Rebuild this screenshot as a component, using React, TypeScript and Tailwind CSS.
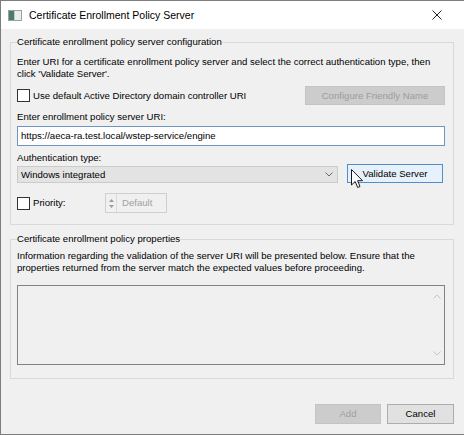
import React from "react";

const font = { fontFamily: '"Liberation Sans", Arial, sans-serif' };

function CheckBox() {
  return <div className="w-[13px] h-[13px] border border-[#333333] bg-white shrink-0" />;
}

function Chevron({ up = false, color = "#707070" }: { up?: boolean; color?: string }) {
  return (
    <svg width="8" height="5" viewBox="0 0 8 5" className="block">
      <path
        d={up ? "M0.5 4.5 L4 1 L7.5 4.5" : "M0.5 0.5 L4 4 L7.5 0.5"}
        fill="none"
        stroke={color}
        strokeWidth="1"
      />
    </svg>
  );
}

function Cursor() {
  return (
    <svg width="13" height="20" viewBox="0 0 13 20" className="block">
      <path
        d="M0.5 0.5 L0.5 16 L4.2 12.5 L6.7 18.5 L9 17.5 L6.6 11.7 L11.5 11.7 Z"
        fill="white"
        stroke="#1a1a1a"
        strokeWidth="1"
        strokeLinejoin="round"
      />
    </svg>
  );
}

function AppIcon() {
  return (
    <svg width="14" height="11" viewBox="0 0 14 11" className="block">
      <rect x="0.5" y="0.5" width="13" height="10" fill="#e9ecec" stroke="#9aa2a2" />
      <rect x="1" y="1" width="5" height="9" fill="#4c7d62" />
      <rect x="6" y="1" width="1" height="9" fill="#c2c9c9" />
    </svg>
  );
}

export default function App() {
  return (
    <div
      className="w-[464px] h-[435px] flex flex-col bg-[#f0f0f0] border-l border-t border-b border-[#7d7d7d] text-black overflow-hidden"
      style={font}
    >
      {/* title bar */}
      <div className="h-[28px] bg-white flex items-center pl-[7px] shrink-0">
        <AppIcon />
        <span className="ml-[7px] text-[10.5px] text-black leading-none">
          Certificate Enrollment Policy Server
        </span>
        <div className="ml-auto mr-[22px]">
          <svg width="10" height="10" viewBox="0 0 10 10" className="block">
            <path d="M0.5 0.5 L9.5 9.5 M9.5 0.5 L0.5 9.5" stroke="#222" strokeWidth="1" />
          </svg>
        </div>
      </div>

      <div className="flex flex-col pl-[9px] text-[9.6px] leading-[12px]">
        {/* server configuration group */}
        <fieldset className="mt-[7px] w-[444px] h-[189px] border border-[#d9d9d9] px-[6px] pt-[8px] relative">
          <legend className="px-0">Certificate enrollment policy server configuration</legend>
          <p>
            Enter URI for a certificate enrollment policy server and select the correct authentication type, then
          </p>
          <p>click 'Validate Server'.</p>

          <div className="mt-[6px] h-[19px] flex items-center">
            <CheckBox />
            <span className="ml-[3px]">Use default Active Directory domain controller URI</span>
            <div className="ml-auto mr-[2px] w-[140px] h-[19px] flex items-center justify-center bg-[#cccccc] border border-[#c4c4c4] text-[#9c9c9c]">
              Configure Friendly Name
            </div>
          </div>

          <p className="mt-[6px]">Enter enrollment policy server URI:</p>
          <div className="mt-[3px] h-[20px] w-[428px] bg-white border border-[#6f95bf] flex items-center pl-[3px]">
            https://aeca-ra.test.local/wstep-service/engine
          </div>

          <p className="mt-[6px]">Authentication type:</p>
          <div className="h-[19px] flex items-end">
            <div className="w-[321px] h-[17px] bg-[#e3e3e3] border border-[#cbcbcb] flex items-center pl-[3px]">
              <span>Windows integrated</span>
              <div className="ml-auto mr-[4px]">
                <Chevron color="#6a6a6a" />
              </div>
            </div>
            <div className="relative ml-[9px] w-[96px] h-[19px] bg-[#e6f1fb] border border-[#4f8fcc] flex items-center justify-center">
              Validate Server
              <div className="absolute left-[3px] top-[4px]">
                <Cursor />
              </div>
            </div>
          </div>

          <div className="mt-[10px] h-[20px] flex items-center">
            <div className="w-[88px] flex items-center">
              <CheckBox />
              <span className="ml-[3px]">Priority:</span>
            </div>
            <div className="w-[62px] h-[20px] border border-[#cfcfcf] flex items-stretch text-[#a0a0a0]">
              <div className="w-[11px] border-r border-[#dadada] flex flex-col items-center justify-center gap-[3px]">
                <svg width="5" height="3" viewBox="0 0 5 3" className="block">
                  <path d="M0 3 L2.5 0 L5 3 Z" fill="#9a9a9a" />
                </svg>
                <svg width="5" height="3" viewBox="0 0 5 3" className="block">
                  <path d="M0 0 L2.5 3 L5 0 Z" fill="#9a9a9a" />
                </svg>
              </div>
              <span className="ml-[5px] self-center">Default</span>
            </div>
          </div>
        </fieldset>

        {/* policy properties group */}
        <fieldset className="mt-[8px] w-[444px] h-[146px] border border-[#d9d9d9] px-[6px] pt-[5px]">
          <legend className="px-0">Certificate enrollment policy properties</legend>
          <p>
            Information regarding the validation of the server URI will be presented below. Ensure that the
          </p>
          <p>properties returned from the server match the expected values before proceeding.</p>
          <div className="mt-[11px] w-[428px] h-[80px] border border-[#828282] flex justify-end">
            <div className="w-[14px] flex flex-col items-center justify-between pt-[8px] pb-[8px]">
              <Chevron up color="#c4c4c4" />
              <Chevron color="#c4c4c4" />
            </div>
          </div>
        </fieldset>

        {/* dialog buttons */}
        <div className="mt-[25px] w-[444px] flex justify-end gap-[6px]">
          <div className="w-[66px] h-[20px] bg-[#cccccc] border border-[#c4c4c4] text-[#a0a0a0] flex items-center justify-center">
            Add
          </div>
          <div className="w-[67px] h-[20px] bg-[#e1e1e1] border border-[#adadad] flex items-center justify-center">
            Cancel
          </div>
        </div>
      </div>
    </div>
  );
}
